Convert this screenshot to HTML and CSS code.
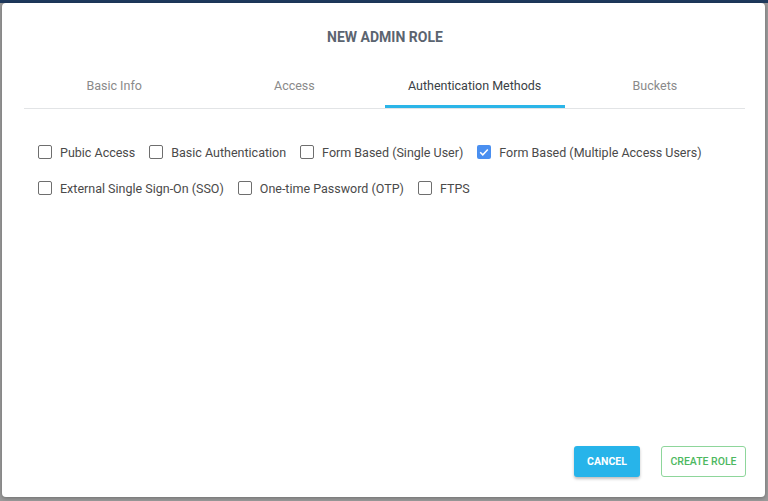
FILE: index.html
```html
<!DOCTYPE html>
<html>
<head>
<meta charset="utf-8">
<link rel="stylesheet" href="styles.css">
</head>
<body>
<div class="backdrop">
  <div class="modal">
    <h1 class="title">NEW ADMIN ROLE</h1>
    <div class="tabs">
      <div class="tab">Basic Info</div>
      <div class="tab">Access</div>
      <div class="tab active">Authentication Methods</div>
      <div class="tab">Buckets</div>
    </div>
    <div class="options">
      <label class="opt"><span class="box"></span>Pubic Access</label>
      <label class="opt"><span class="box"></span>Basic Authentication</label>
      <label class="opt"><span class="box"></span>Form Based (Single User)</label>
      <label class="opt"><span class="box checked"><svg width="14" height="14" viewBox="0 0 14 14"><path d="M3.2 7.2 L5.8 9.8 L10.8 4.4" fill="none" stroke="#fff" stroke-width="1.5"/></svg></span>Form Based (Multiple Access Users)</label>
      <label class="opt"><span class="box"></span>External Single Sign-On (SSO)</label>
      <label class="opt"><span class="box"></span>One-time Password (OTP)</label>
      <label class="opt"><span class="box"></span>FTPS</label>
    </div>
    <div class="footer">
      <button class="btn cancel">CANCEL</button>
      <button class="btn create">CREATE ROLE</button>
    </div>
  </div>
</div>
</body>
</html>
```

FILE: styles.css
```css
* { box-sizing: border-box; }
html, body { margin: 0; padding: 0; }
body {
  width: 768px;
  height: 501px;
  overflow: hidden;
  font-family: Roboto, "Liberation Sans", sans-serif;
  background: #9b9b9b;
}
.backdrop {
  height: 501px;
  padding: 0 3px 4px 2px;
  border-top: 3px solid #1f3a5e;
  display: flex;
}
.modal {
  flex: 1;
  background: #fff;
  border-radius: 4px;
  box-shadow: 0 1px 4px rgba(0,0,0,0.3);
  padding: 0 19px 0 22px;
  display: flex;
  flex-direction: column;
}
.title {
  margin: 26px 0 0;
  text-align: center;
  font-size: 14px;
  font-weight: 700;
  color: #5b6470;
  height: 17px;
  line-height: 17px;
}
.tabs {
  margin-top: 30px;
  margin-right: 1px;
  display: flex;
  border-bottom: 1px solid #e2e4e6;
}
.tab {
  flex: 1;
  text-align: center;
  font-size: 12.5px;
  color: #8a8a8a;
  height: 32px;
  line-height: 18px;
  padding-top: 1px;
  border-bottom: 3px solid transparent;
}
.tab.active {
  color: #3a3f45;
  border-bottom-color: #2bb5e8;
}
.options {
  margin-top: 34px;
  padding-left: 14px;
  display: flex;
  flex-wrap: wrap;
  row-gap: 18px;
  column-gap: 14px;
  width: 690px;
}
.opt {
  display: flex;
  align-items: center;
  gap: 8px;
  font-size: 12.5px;
  color: #4a4a4a;
  height: 18px;
}
.box {
  width: 14px;
  height: 14px;
  border: 1.5px solid #6e6e6e;
  border-radius: 2px;
  display: inline-block;
  flex: none;
}
.box.checked {
  border: none;
  background: #4a8ff0;
}
.box svg { display: block; }
.footer {
  margin-top: auto;
  margin-bottom: 20px;
  display: flex;
  justify-content: flex-end;
  gap: 21px;
}
.btn {
  font-family: Roboto, "Liberation Sans", sans-serif;
  font-size: 10.5px;
  font-weight: 500;
  height: 31px;
  border-radius: 3px;
  cursor: pointer;
}
.cancel {
  width: 66px;
  background: #27b4ea;
  color: #fff;
  border: none;
  font-weight: 700;
  box-shadow: 0 2px 3px rgba(0,0,0,0.25);
}
.create {
  width: 85px;
  background: #fff;
  color: #4cb860;
  border: 1px solid #8ed69b;
}
```
